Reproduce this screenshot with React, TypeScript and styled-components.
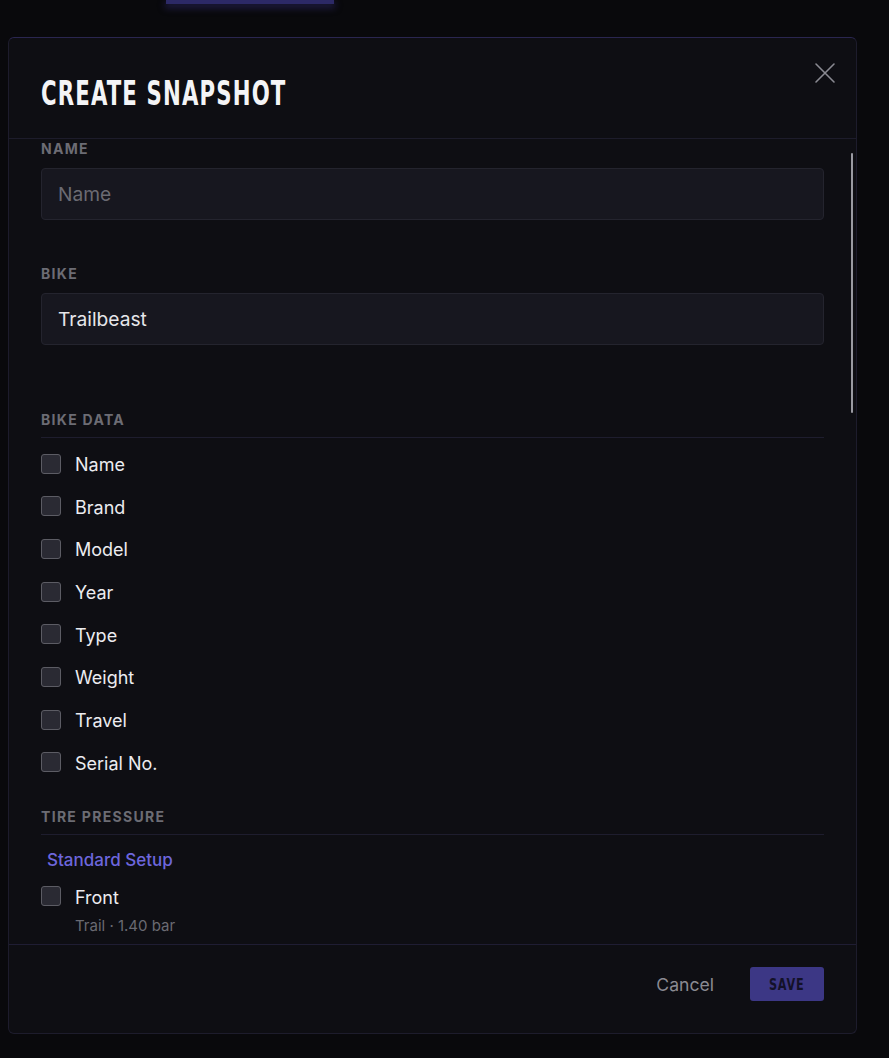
import React from "react";
import styled, { createGlobalStyle } from "styled-components";

const Global = createGlobalStyle`
  html, body { margin: 0; padding: 0; background: #09090c; }
  body { font-family: Inter, "Noto Sans", sans-serif; color: #e6e6ea; }
  * { box-sizing: border-box; }
`;

const Page = styled.div`
  height: 1058px;
  overflow: hidden;
  display: flex;
  flex-direction: column;
  padding: 0 32px 0 8px;
`;

const BackdropButton = styled.div`
  width: 168px;
  height: 4px;
  margin-left: 158px;
  background: #2c2966;
  box-shadow: 0 3px 7px 1px rgba(48, 44, 110, 0.6);
  flex-shrink: 0;
`;

const Modal = styled.div`
  margin-top: 33px;
  height: 997px;
  display: flex;
  flex-direction: column;
  background: #0e0e13;
  border: 1px solid #1d1c2c;
  border-top-color: #2a2650;
  border-radius: 6px;
  overflow: hidden;
  flex-shrink: 0;
`;

const Header = styled.div`
  display: flex;
  justify-content: space-between;
  align-items: flex-start;
  padding: 36px 19px 24px 32px;
  border-bottom: 1px solid #1d1c2b;
  flex-shrink: 0;
`;

const Title = styled.h1`
  margin: 0;
  font-family: "DejaVu Sans Condensed", "DejaVu Sans", sans-serif;
  font-weight: 700;
  font-size: 33px;
  line-height: 40px;
  letter-spacing: 1.6px;
  color: #f4f4f6;
  text-transform: uppercase;
  transform: scaleX(0.716);
  transform-origin: left center;
  white-space: nowrap;
`;

const CloseButton = styled.button`
  margin-top: -13px;
  width: 24px;
  height: 24px;
  padding: 0;
  border: none;
  background: transparent;
  color: #8a8a92;
  display: flex;
  align-items: center;
  justify-content: center;
  cursor: pointer;
`;

const BodyFrame = styled.div`
  position: relative;
  flex: 1;
  min-height: 0;
`;

const Body = styled.div`
  height: 100%;
  overflow: hidden;
  padding: 2px 32px 0 32px;
`;

const ScrollThumb = styled.div`
  position: absolute;
  top: 14px;
  right: 3px;
  width: 2px;
  height: 260px;
  background: #9a9aa2;
  border-radius: 1px;
`;

const Field = styled.div<{ $gap?: number }>`
  display: flex;
  flex-direction: column;
  margin-bottom: ${(p) => p.$gap ?? 46}px;
`;

const Label = styled.div`
  font-size: 14px;
  line-height: 16px;
  font-weight: 700;
  letter-spacing: 1.3px;
  color: #6c6c74;
  text-transform: uppercase;
`;

const FieldLabel = styled(Label)`
  margin-bottom: 11px;
`;

const Input = styled.input`
  height: 52px;
  width: 100%;
  background: #17171f;
  border: 1px solid #24242e;
  border-radius: 4px;
  padding: 0 16px;
  font-family: Inter, sans-serif;
  font-size: 19.2px;
  color: #e6e6ea;
  outline: none;
  &::placeholder { color: #6b6b73; }
`;

const Section = styled.div`
  margin-bottom: 32px;
`;

const SectionHead = styled(Label)`
  padding-bottom: 9px;
  border-bottom: 1px solid #1e1d2e;
  margin-bottom: 13px;
`;

const List = styled.div`
  display: flex;
  flex-direction: column;
  gap: 15.7px;
`;

const Row = styled.label`
  display: flex;
  align-items: center;
  gap: 14px;
  height: 27px;
  font-size: 18px;
  color: #ececf0;
  cursor: pointer;
`;

const Box = styled.span`
  width: 20px;
  height: 20px;
  border-radius: 3px;
  border: 1px solid #5c5c64;
  background: #2a2a33;
  flex-shrink: 0;
  margin-top: -2px;
`;

const Group = styled.div`
  font-size: 17px;
  font-weight: 500;
  color: #6d66dc;
  padding-left: 6px;
  margin-bottom: 12px;
  line-height: 24px;
`;

const Entry = styled.div`
  display: flex;
  flex-direction: column;
`;

const Sub = styled.div`
  font-size: 15px;
  color: #6a6a72;
  padding-left: 34px;
  line-height: 22px;
  margin-top: 4px;
`;

const Footer = styled.div`
  display: flex;
  justify-content: flex-end;
  align-items: center;
  gap: 20px;
  padding: 22px 32px 32px;
  border-top: 1px solid #1f1d33;
  flex-shrink: 0;
`;

const CancelButton = styled.button`
  background: transparent;
  border: none;
  height: 34px;
  padding: 0 16px;
  font-family: Inter, sans-serif;
  font-size: 17.6px;
  color: #8a8a92;
  cursor: pointer;
`;

const SaveButton = styled.button`
  width: 74px;
  height: 34px;
  border: none;
  border-radius: 3px;
  background: #3c3785;
  color: #131128;
  font-family: "DejaVu Sans Condensed", "DejaVu Sans", sans-serif;
  font-weight: 700;
  font-size: 16px;
  letter-spacing: 1px;
  cursor: pointer;
  display: flex;
  align-items: center;
  justify-content: center;
`;

const SaveText = styled.span`
  display: inline-block;
  transform: scaleX(0.78);
`;

const bikeData = ["Name", "Brand", "Model", "Year", "Type", "Weight", "Travel", "Serial No."];

const Check: React.FC<{ label: string }> = ({ label }) => (
  <Row>
    <Box />
    {label}
  </Row>
);

export default function App() {
  return (
    <>
      <Global />
      <Page>
        <BackdropButton />
        <Modal>
          <Header>
            <Title>Create Snapshot</Title>
            <CloseButton aria-label="Close">
              <svg width="22" height="22" viewBox="0 0 22 22" fill="none" stroke="currentColor" strokeWidth="1.6" strokeLinecap="round">
                <path d="M2 2 L20 20 M20 2 L2 20" />
              </svg>
            </CloseButton>
          </Header>
          <BodyFrame>
            <Body>
              <Field>
                <FieldLabel>Name</FieldLabel>
                <Input placeholder="Name" />
              </Field>
              <Field $gap={67}>
                <FieldLabel>Bike</FieldLabel>
                <Input defaultValue="Trailbeast" />
              </Field>
              <Section>
                <SectionHead>Bike Data</SectionHead>
                <List>
                  {bikeData.map((b) => (
                    <Check key={b} label={b} />
                  ))}
                </List>
              </Section>
              <Section>
                <SectionHead>Tire Pressure</SectionHead>
                <Group>Standard Setup</Group>
                <Entry>
                  <Check label="Front" />
                  <Sub>Trail · 1.40 bar</Sub>
                </Entry>
              </Section>
            </Body>
            <ScrollThumb />
          </BodyFrame>
          <Footer>
            <CancelButton>Cancel</CancelButton>
            <SaveButton>
              <SaveText>SAVE</SaveText>
            </SaveButton>
          </Footer>
        </Modal>
      </Page>
    </>
  );
}
